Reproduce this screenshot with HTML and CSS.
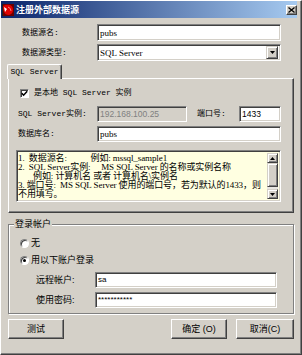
FILE: index.html
```html
<!DOCTYPE html>
<html lang="zh-CN">
<head>
    <meta charset="UTF-8">
    <meta name="viewport" content="width=device-width, initial-scale=1.0">
    <title>注册外部数据源</title>
    <link rel="stylesheet" href="styles.css">
</head>
<body>
    <div class="window">
        <div class="titlebar">
            <svg class="app-icon" width="12" height="12" viewBox="0 0 12 12">
                <rect x="0" y="0" width="12" height="12" fill="#6b0000"/>
                <path d="M1 2 Q4 0 8 1 Q11 2 11 6 Q11 10 7 11 Q3 11 2 8 Q1 5 1 2Z" fill="#e00000"/>
                <path d="M2 3 L5 5 L3 8 Z" fill="#fff"/>
                <path d="M6 3 Q9 4 9 7" stroke="#ff8080" stroke-width="1" fill="none"/>
                <rect x="0" y="0" width="1" height="12" fill="#202020"/>
            </svg>
            <span class="title-text">注册外部数据源</span>
            <span class="close-btn">
                <svg width="7" height="6" viewBox="0 0 7 6"><path d="M0.5 0.5L6.5 5.5M6.5 0.5L0.5 5.5" stroke="#000" stroke-width="1.3"/></svg>
            </span>
        </div>

        <div class="content">
            <div class="form-row">
                <span class="label">数据源名:</span>
                <div class="field wide">pubs</div>
            </div>
            <div class="form-row">
                <span class="label">数据源类型:</span>
                <div class="field wide select">
                    <span>SQL Server</span>
                    <span class="drop-btn">
                        <svg width="5" height="3" viewBox="0 0 5 3"><polygon points="0,0 5,0 2.5,3" fill="#000"/></svg>
                    </span>
                </div>
            </div>

            <div class="tabs">
                <div class="tab-strip">
                    <div class="tab">SQL Server</div>
                </div>
                <div class="tab-panel">
                    <div class="check-row">
                        <span class="checkbox">
                            <svg width="7" height="7" viewBox="0 0 7 7"><path d="M0.8 3.2 L2.6 5.2 L6.2 1.2" stroke="#000" stroke-width="1.5" fill="none"/></svg>
                        </span>
                        <span>是本地 SQL Server 实例</span>
                    </div>
                    <div class="panel-row">
                        <span class="label">SQL Server实例:</span>
                        <div class="field disabled instance">192.168.100.25</div>
                        <span class="port-label">端口号:</span>
                        <div class="field port">1433</div>
                    </div>
                    <div class="panel-row tight">
                        <span class="label">数据库名:</span>
                        <div class="field wide">pubs</div>
                    </div>
                    <div class="memo">
                        <div class="memo-text">1.  数据源名:           例如: mssql_sample1
2.  SQL Server实例:     MS SQL Server 的名称或实例名称
       例如: 计算机名 或者 计算机名\实例名
3. 端口号:  MS SQL Server 使用的端口号，若为默认的1433，则
不用填写。</div>
                        <div class="scrollbar">
                            <span class="sb-btn">
                                <svg width="5" height="3" viewBox="0 0 5 3"><polygon points="0,3 5,3 2.5,0" fill="#000"/></svg>
                            </span>
                            <span class="sb-thumb"></span>
                            <span class="sb-track"></span>
                            <span class="sb-btn">
                                <svg width="5" height="3" viewBox="0 0 5 3"><polygon points="0,0 5,0 2.5,3" fill="#000"/></svg>
                            </span>
                        </div>
                    </div>
                </div>
            </div>

            <fieldset class="group">
                <legend>登录帐户</legend>
                <div class="radio-row">
                    <span class="radio"></span>
                    <span>无</span>
                </div>
                <div class="radio-row next">
                    <span class="radio checked"><span class="dot"></span></span>
                    <span>用以下账户登录</span>
                </div>
                <div class="account-row">
                    <span class="label">远程帐户:</span>
                    <div class="field account">sa</div>
                </div>
                <div class="account-row tight">
                    <span class="label">使用密码:</span>
                    <div class="field account">***********</div>
                </div>
            </fieldset>

            <div class="buttons">
                <button class="btn" type="button">测试</button>
                <button class="btn ok" type="button">确定 (O)</button>
                <button class="btn cancel" type="button">取消(C)</button>
            </div>
        </div>
    </div>
</body>
</html>
```

FILE: styles.css
```css
* {
    box-sizing: border-box;
}
body {
    margin: 0;
    background: #d4d0c8;
    font: 8px/10px "Liberation Mono", "Noto Sans CJK SC", monospace;
    color: #000;
}
.window {
    width: 302px;
    height: 355px;
    background: #d4d0c8;
    border-top: 1px solid #fff;
    border-left: 1px solid #fff;
    border-right: 1px solid #404040;
    border-bottom: 1px solid #404040;
    box-shadow: inset -1px -1px 0 #808080;
    padding: 0 4px 0 0;
}

/* barra de titulo */
.titlebar {
    height: 17px;
    display: flex;
    align-items: center;
    padding-left: 1px;
    background: linear-gradient(to right, #0a246a, #a6caf0);
}
.app-icon {
    margin-right: 2px;
}
.title-text {
    color: #fff;
    font: bold 9px/17px "Noto Sans CJK SC", sans-serif;
}
.close-btn {
    margin-left: auto;
    width: 11px;
    height: 10px;
    display: flex;
    align-items: center;
    justify-content: center;
    background: #d4d0c8;
    border: 1px solid;
    border-color: #fff #404040 #404040 #fff;
    box-shadow: inset -1px -1px 0 #808080;
}

.content {
    padding: 6px 3px 0 7px;
}

/* campos */
.field {
    height: 100%;
    display: flex;
    align-items: center;
    padding: 0 2px;
    background: #fff;
    border: 1px solid;
    border-color: #808080 #fff #fff #808080;
    box-shadow: inset 1px 1px 0 #404040, inset -1px -1px 0 #d4d0c8;
    font: 9px/10px "Liberation Serif", "Noto Sans CJK SC", serif;
    white-space: nowrap;
}
.field.disabled {
    background: #d4d0c8;
    color: #808080;
    font-family: "Liberation Sans", sans-serif;
    font-size: 8.5px;
}
.field.port {
    width: 42px;
    font-family: "Liberation Sans", sans-serif;
    font-size: 8.5px;
}
.field.wide {
    width: 184px;
}
.select {
    justify-content: space-between;
    padding-right: 2px;
}
.drop-btn {
    width: 12px;
    height: 13px;
    display: flex;
    align-items: center;
    justify-content: center;
    background: #d4d0c8;
    border: 1px solid;
    border-color: #d4d0c8 #404040 #404040 #d4d0c8;
    box-shadow: inset 1px 1px 0 #fff, inset -1px -1px 0 #808080;
}

.form-row {
    display: flex;
    align-items: center;
    height: 17px;
    margin-bottom: 3px;
    padding-left: 14px;
}
.form-row .label {
    width: 75px;
}

/* pestañas */
.tabs {
    margin-top: 2px;
}
.tab-strip {
    display: flex;
    height: 14px;
}
.tab {
    position: relative;
    z-index: 1;
    width: 55px;
    height: 15px;
    margin-left: -1px;
    background: #d4d0c8;
    border-top: 1px solid #fff;
    border-left: 1px solid #fff;
    border-right: 1px solid #404040;
    border-radius: 2px 2px 0 0;
    box-shadow: inset -1px 0 0 #808080;
    text-align: center;
    line-height: 13px;
}
.tab-panel {
    border: 1px solid;
    border-color: #fff #404040 #404040 #fff;
    box-shadow: inset -1px -1px 0 #808080;
    padding: 9px 12px 10px 9px;
}
.check-row {
    display: flex;
    align-items: center;
    gap: 5px;
    height: 10px;
    padding-left: 2px;
}
.checkbox {
    width: 9px;
    height: 9px;
    display: flex;
    align-items: center;
    justify-content: center;
    background: #fff;
    border: 1px solid;
    border-color: #808080 #fff #fff #808080;
    box-shadow: inset 1px 1px 0 #404040;
}
.panel-row {
    display: flex;
    align-items: center;
    height: 16px;
    margin-top: 8px;
}
.panel-row.tight {
    margin-top: 4px;
}
.panel-row .label {
    width: 79px;
}
.field.instance {
    width: 90px;
}
.port-label {
    width: 42px;
    margin-left: 10px;
}

/* nota */
.memo {
    display: flex;
    width: 265px;
    height: 52px;
    margin-top: 8px;
    margin-left: -2px;
    padding: 2px 2px 2px 1px;
    background: #ffffe1;
    border: 1px solid;
    border-color: #808080 #fff #fff #808080;
    box-shadow: inset 1px 1px 0 #404040, inset -1px -1px 0 #d4d0c8;
}
.memo-text {
    flex: 1;
    overflow: hidden;
    padding-top: 1px;
    font: 9px/9px "Liberation Serif", "Noto Sans CJK SC", serif;
    letter-spacing: -0.1px;
    white-space: pre;
}
.scrollbar {
    width: 11px;
    display: flex;
    flex-direction: column;
    background: #e8e6e1;
}
.sb-btn,
.sb-thumb {
    display: flex;
    align-items: center;
    justify-content: center;
    background: #d4d0c8;
    border: 1px solid;
    border-color: #d4d0c8 #404040 #404040 #d4d0c8;
    box-shadow: inset 1px 1px 0 #fff, inset -1px -1px 0 #808080;
}
.sb-btn {
    height: 10px;
}
.sb-thumb {
    height: 24px;
}
.sb-track {
    flex: 1;
}

/* grupo de cuenta */
.group {
    margin: 5px 0 0;
    padding: 7px 0 5px 11px;
    border: 1px solid #808080;
    box-shadow: 1px 1px 0 #fff, inset 1px 1px 0 #fff;
    font: 9px/12px "Liberation Sans", "Noto Sans CJK SC", sans-serif;
}
.group legend {
    margin-left: -6px;
    padding: 0 1px;
    line-height: 12px;
    background: #d4d0c8;
}
.radio-row {
    display: flex;
    align-items: center;
    gap: 2px;
    height: 12px;
}
.radio-row.next {
    margin-top: 5px;
}
.radio {
    width: 9px;
    height: 9px;
    display: flex;
    align-items: center;
    justify-content: center;
    border-radius: 50%;
    background: #fff;
    border: 1px solid;
    border-color: #808080 #fff #fff #808080;
    box-shadow: inset 1px 1px 0 #404040;
}
.radio .dot {
    width: 3px;
    height: 3px;
    border-radius: 50%;
    background: #000;
}
.account-row {
    display: flex;
    align-items: center;
    height: 16px;
    margin-top: 6px;
    padding-left: 16px;
}
.account-row.tight {
    margin-top: 4px;
}
.account-row .label {
    width: 59px;
}
.field.account {
    width: 182px;
    font: 8px/10px "Liberation Sans", sans-serif;
}

/* botones */
.buttons {
    display: flex;
    gap: 9px;
    margin-top: 5px;
}
.btn {
    width: 56px;
    height: 20px;
    padding: 0;
    background: #d4d0c8;
    border: 1px solid;
    border-color: #fff #404040 #404040 #fff;
    box-shadow: inset -1px -1px 0 #808080;
    font: 9px/12px "Liberation Sans", "Noto Sans CJK SC", sans-serif;
    color: #000;
}
.btn.ok {
    margin-left: auto;
}
.btn.cancel {
    width: 58px;
}
```
